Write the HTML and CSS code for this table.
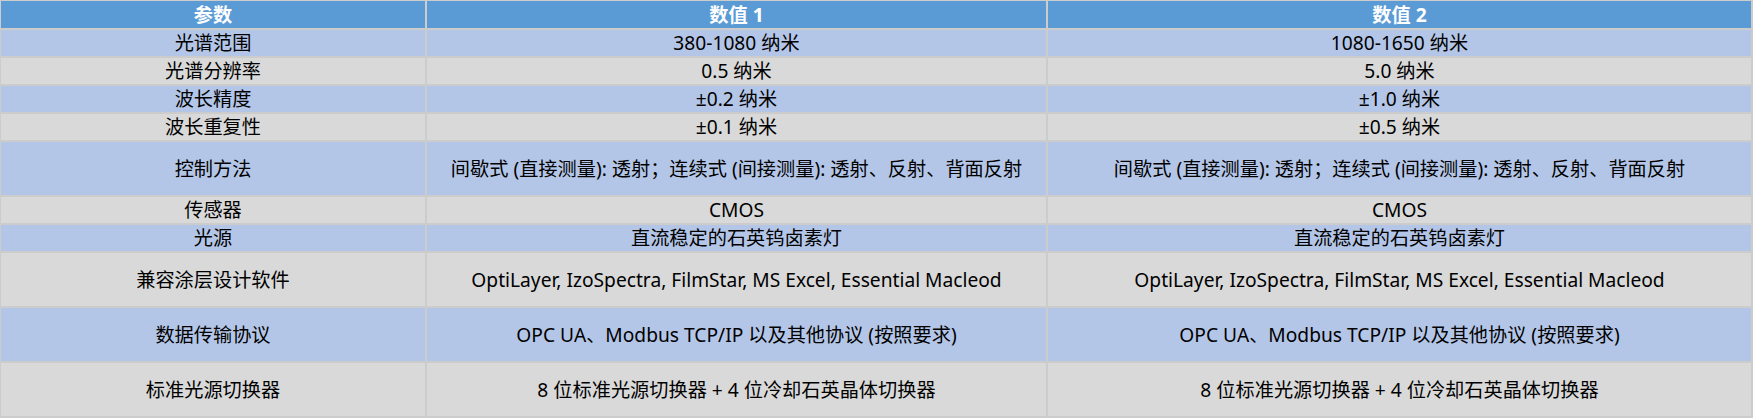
FILE: index.html
```html
<!DOCTYPE html>
<html lang="zh-CN">
<head>
<meta charset="utf-8">
<title>参数表</title>
<link rel="stylesheet" href="styles.css">
</head>
<body>
<div class="wrap">
<table class="spec">
<colgroup><col class="c1"><col class="c2"><col class="c3"></colgroup>
<thead>
<tr class="head"><th>参数</th><th>数值 1</th><th>数值 2</th></tr>
</thead>
<tbody>
<tr class="blue"><td>光谱范围</td><td>380-1080 纳米</td><td>1080-1650 纳米</td></tr>
<tr class="grey"><td>光谱分辨率</td><td>0.5 纳米</td><td>5.0 纳米</td></tr>
<tr class="blue"><td>波长精度</td><td>±0.2 纳米</td><td>±1.0 纳米</td></tr>
<tr class="grey"><td>波长重复性</td><td>±0.1 纳米</td><td>±0.5 纳米</td></tr>
<tr class="blue tall"><td>控制方法</td><td>间歇式 (直接测量): 透射；连续式 (间接测量): 透射、反射、背面反射</td><td>间歇式 (直接测量): 透射；连续式 (间接测量): 透射、反射、背面反射</td></tr>
<tr class="grey"><td>传感器</td><td>CMOS</td><td>CMOS</td></tr>
<tr class="blue"><td>光源</td><td>直流稳定的石英钨卤素灯</td><td>直流稳定的石英钨卤素灯</td></tr>
<tr class="grey tall"><td>兼容涂层设计软件</td><td>OptiLayer, IzoSpectra, FilmStar, MS Excel, Essential Macleod</td><td>OptiLayer, IzoSpectra, FilmStar, MS Excel, Essential Macleod</td></tr>
<tr class="blue tall"><td>数据传输协议</td><td>OPC UA、Modbus TCP/IP 以及其他协议 (按照要求)</td><td>OPC UA、Modbus TCP/IP 以及其他协议 (按照要求)</td></tr>
<tr class="grey tall"><td>标准光源切换器</td><td>8 位标准光源切换器 + 4 位冷却石英晶体切换器</td><td>8 位标准光源切换器 + 4 位冷却石英晶体切换器</td></tr>
</tbody>
</table>
</div>
</body>
</html>
```
FILE: styles.css
```css
html, body {
  margin: 0;
  padding: 0;
  background: #ffffff;
}

.wrap {
  margin: -1px 0 0 -1px;
}

.spec {
  border-collapse: separate;
  border-spacing: 2px;
  background: #cccccc;
  table-layout: fixed;
  width: 1754px;
  font-family: "Noto Sans", "Noto Sans CJK SC", sans-serif;
  font-size: 19.2px;
  color: #000000;
}

.c1 { width: 424px; }
.c2 { width: 619px; }
.c3 { width: 703px; }

.spec th,
.spec td {
  padding: 0;
  text-align: center;
  vertical-align: middle;
  line-height: 24px;
  white-space: nowrap;
}

.head th {
  height: 27px;
  background: #5b9bd5;
  color: #ffffff;
  font-weight: 700;
}

.spec td {
  height: 26px;
}

.tall td {
  height: 53px;
}

.blue td { background: #b4c6e7; }
.grey td { background: #d9d9d9; }
```
